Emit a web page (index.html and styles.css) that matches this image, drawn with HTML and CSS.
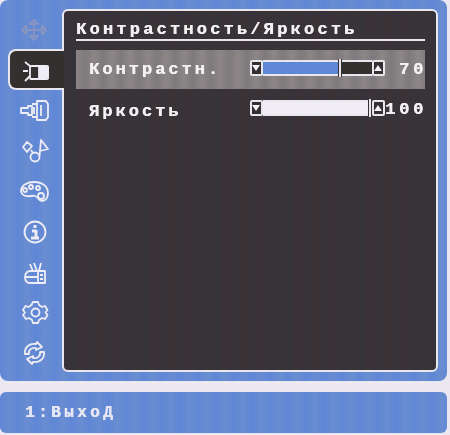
FILE: index.html
```html
<!DOCTYPE html>
<html lang="ru">
<head>
    <meta charset="UTF-8">
    <meta name="viewport" content="width=device-width, initial-scale=1.0">
    <title>Контрастность/Яркость</title>
    <link rel="stylesheet" href="styles.css">
</head>
<body>
    <div class="osd">
        <div class="main">
            <div class="sidebar">
                <!-- first icon is dimmed, the second is the open tab -->
                <div class="tab dim">
                    <svg viewBox="0 0 30 30" class="icon"><path d="M14 6l-4 4h8zM14 26l-4-4h8zM2 16l4-4v8zM26 16l-4-4v8zM14 10v12M6 16h16"/></svg>
                </div>
                <div class="tab active">
                    <svg viewBox="0 0 30 30" class="icon"><path d="M3 16h5M5 7l5 4M5 26l5-5"/><rect x="10" y="11" width="18" height="13" rx="1"/><rect class="solid" x="19" y="12" width="9" height="11"/></svg>
                </div>
                <div class="tab">
                    <svg viewBox="0 0 30 30" class="icon"><path d="M1 13h7v-2h4v9H8v-2H1zM12 9h5v13h-5M17 6h9l2 3v13l-2 3h-9zM21 10v11M14 12v7"/></svg>
                </div>
                <div class="tab">
                    <svg viewBox="0 0 30 30" class="icon"><path d="M7 7l5 4-5 6-4-5zM11 15l2 3M19.500 21L21 5l7 9-8 2"/><circle cx="15" cy="22" r="4.500"/></svg>
                </div>
                <div class="tab">
                    <svg viewBox="0 0 30 30" class="icon"><path d="M1 15c0-6 7-9 13-9 8 0 14 4 14 11 0 4-2 8-6 8-4 0-3-4-7-5-3-1-5 1-8 0-3 0-6-2-6-5z"/><circle cx="5" cy="14" r="2"/><circle cx="11" cy="11" r="2"/><circle cx="18" cy="12" r="2"/><circle cx="21" cy="20" r="3"/></svg>
                </div>
                <div class="tab">
                    <svg viewBox="0 0 30 30" class="icon"><circle cx="15" cy="16" r="10.500"/><path class="thick" d="M15 9v3M12 15h4v7M11 22h8"/></svg>
                </div>
                <div class="tab">
                    <svg viewBox="0 0 30 30" class="icon"><path d="M10 7l3 7M21 6l-2 8M14 6l3 8M10 14h15v12H10c-3 0-5-2-5-6s3-6 5-6zM18 14v12M5 20h13M20 18h3M20 22h3"/></svg>
                </div>
                <div class="tab">
                    <svg viewBox="0 0 30 30" class="icon"><path d="M13 5h5l1 3 3 2 3-1 2.500 4-2 2.500 2 2.500-2.500 4-3-1-3 2-1 3h-5l-1-3-3-2-3 1L3 18l2-2.500L3 13l2.500-4 3 1 3-2z"/><circle cx="15.500" cy="15.500" r="4"/></svg>
                </div>
                <div class="tab">
                    <svg viewBox="0 0 30 30" class="icon"><path d="M5 17C4 10 10 6 16 7l1-2 5 5-6 3v-2c-4-1-8 2-7 6zM24 15c1 7-5 11-11 10l-1 2-5-5 6-3v2c4 1 8-2 7-6z"/></svg>
                </div>
            </div>
            <div class="panel">
                <div class="title">Контрастность/Яркость</div>
                <div class="row selected">
                    <span class="label">Контрастн.</span>
                    <div class="slider">
                        <span class="btn down"></span>
                        <div class="track"><div class="fill blue" style="width: 75px"></div><span class="thumb"></span></div>
                        <span class="btn up"></span>
                    </div>
                    <span class="value">70</span>
                </div>
                <div class="row">
                    <span class="label">Яркость</span>
                    <div class="slider">
                        <span class="btn down"></span>
                        <div class="track"><div class="fill white" style="width: 105px"></div><span class="thumb"></span></div>
                        <span class="btn up"></span>
                    </div>
                    <span class="value">100</span>
                </div>
            </div>
        </div>
        <div class="footer">1:ВыхоД</div>
    </div>
</body>
</html>
```

FILE: styles.css
```css
body {
    margin: 0;
    background: #ebe8f2;
    font-family: "Liberation Mono", monospace;
    font-weight: bold;
    color: #f2f0f2;
}

/* the reference is a soft photo of a monitor menu */
.osd {
    width: 447px;
    height: 435px;
    overflow: hidden;
    filter: blur(0.4px);
}

/* Blue part with icons and dark panel */
.main {
    height: 363px;
    padding: 9px 9px 9px 8px;
    display: flex;
    background: repeating-linear-gradient(to right, #5f87d6 0, #6a8dd1 9px, #5f87d6 18px);
    border-radius: 8px;
}

.sidebar {
    width: 54px;
    flex-shrink: 0;
    display: flex;
    flex-direction: column;
}

.tab {
    height: 40.4px;
    flex-shrink: 0;
    display: flex;
    align-items: center;
    justify-content: center;
    box-sizing: border-box;
}

.tab.dim .icon {
    stroke: #9a9ab8;
    opacity: 0.7;
}

.tab.active {
    background: #34302f;
    border: 2px solid #e8e6ee;
    border-right: none;
    border-radius: 8px 0 0 8px;
    margin-right: -2px;
    padding-right: 4px;
    position: relative;
    z-index: 1;
}

.icon {
    width: 30px;
    height: 30px;
    flex-shrink: 0;
    fill: none;
    stroke: #eeecf4;
    stroke-width: 1.8;
    stroke-linejoin: round;
}

.icon .thick {
    stroke-width: 3;
}

.icon .solid {
    fill: #eeecf4;
}

/* Dark panel */
.panel {
    flex: 1;
    min-width: 0;
    background: repeating-linear-gradient(to right, #3b3336 0, #35333a 9px, #3b3336 18px);
    border: 2px solid #e8e6ee;
    border-radius: 6px;
    padding: 9px 11px 0 12px;
}

.title {
    font-size: 17px;
    line-height: 19px;
    letter-spacing: 3.2px;
    height: 19px;
    border-bottom: 2px solid #e8e6ee;
    white-space: nowrap;
    text-shadow: 0.4px 0 0 currentColor;
}

.row {
    height: 39px;
    display: flex;
    align-items: center;
    font-size: 17px;
    letter-spacing: 3px;
    margin-top: 9px;
    text-shadow: 0.4px 0 0 currentColor;
}

.row + .row {
    margin-top: 0;
    height: 38px;
}

.row.selected {
    background: repeating-linear-gradient(to right, #8c8687 0, #7e797c 9px, #8c8687 18px);
}

.label {
    width: 174px;
    padding-left: 13px;
    box-sizing: border-box;
    white-space: nowrap;
}

.row + .row .label {
    padding-top: 6px;
}

.row + .row .value {
    padding-top: 2px;
}

/* Slider with arrow buttons */
.slider {
    width: 135px;
    height: 16px;
    margin-top: -3px;
    display: flex;
    flex-shrink: 0;
}

.row + .row .slider {
    margin-top: 0;
}

.btn {
    width: 13px;
    background: #34302f;
    border: 2px solid #e8e6ee;
    box-sizing: border-box;
    border-radius: 2px;
    position: relative;
    flex-shrink: 0;
}

.btn::after {
    content: "";
    position: absolute;
    left: 0;
    top: 3px;
    border-left: 4.5px solid transparent;
    border-right: 4.5px solid transparent;
}

.btn.down::after {
    border-top: 6px solid #f4f2f8;
}

.btn.up::after {
    border-bottom: 6px solid #f4f2f8;
}

.track {
    flex: 1;
    display: flex;
    background: #34302f;
    border-top: 2px solid #e8e6ee;
    border-bottom: 2px solid #e8e6ee;
}

.fill.blue {
    background: #6088d8;
}

.fill.white {
    background: #f0eef4;
}

.thumb {
    width: 2px;
    margin: -3px 0;
    border-left: 1px solid #34302f;
    border-right: 1px solid #34302f;
    background: #e8e6ee;
}

.value {
    flex: 1;
    min-width: 0;
    margin-right: -2px;
    text-align: right;
    letter-spacing: 3.8px;
    white-space: nowrap;
}

.footer {
    height: 39px;
    margin-top: 11px;
    padding: 2px 0 0 25px;
    line-height: 39px;
    font-size: 16px;
    letter-spacing: 3.4px;
    color: #e6e7f2;
    background: repeating-linear-gradient(to right, #5f87d6 0, #6a8dd1 9px, #5f87d6 18px);
    border-radius: 6px;
    text-shadow: 0.4px 0 0 currentColor;
}
```
